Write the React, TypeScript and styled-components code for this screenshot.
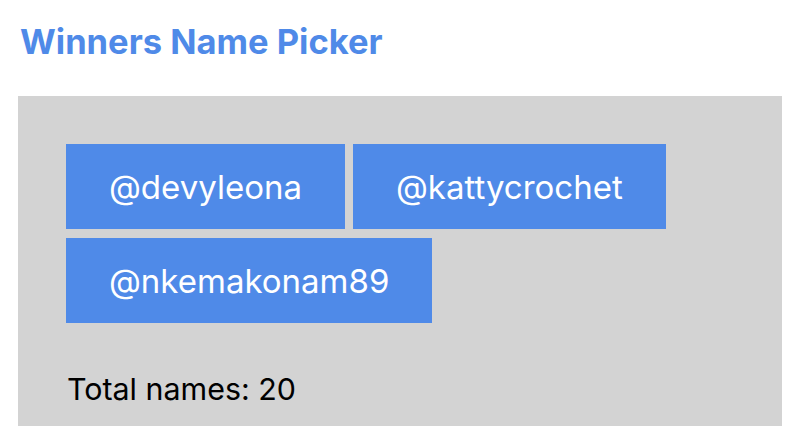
import styled, { createGlobalStyle } from "styled-components";

const GlobalStyle = createGlobalStyle`
  body {
    margin: 0;
    background: #fff;
    font-family: Inter, "Noto Sans", sans-serif;
  }
`;

const Page = styled.div`
  padding-top: 22px;
`;

const Title = styled.h1`
  margin: 0 0 34px 20px;
  font-size: 34.5px;
  line-height: 40px;
  font-weight: 700;
  color: #4f8ae8;
`;

const Panel = styled.section`
  margin-left: 18px;
  width: 764px;
  box-sizing: border-box;
  padding: 48px 48px 40px;
  background: #d3d3d3;
`;

const NameList = styled.div`
  display: flex;
  flex-wrap: wrap;
  gap: 9px 8px;
`;

const NameButton = styled.button`
  display: flex;
  align-items: center;
  justify-content: center;
  height: 85px;
  padding: 0 43px;
  border: none;
  border-radius: 0;
  background: #4f8ae8;
  color: #fff;
  font-family: Inter, "Noto Sans", sans-serif;
  font-size: 33px;
  font-weight: 400;
  cursor: pointer;
`;

const Total = styled.p`
  margin: 46px 0 0 1px;
  font-size: 30.4px;
  line-height: 40px;
  color: #000;
`;

const winners = ["@devyleona", "@kattycrochet", "@nkemakonam89"];

export default function App() {
  return (
    <>
      <GlobalStyle />
      <Page>
        <Title>Winners Name Picker</Title>
        <Panel>
          <NameList>
            {winners.map((name) => (
              <NameButton key={name}>{name}</NameButton>
            ))}
          </NameList>
          <Total>Total names: 20</Total>
        </Panel>
      </Page>
    </>
  );
}
